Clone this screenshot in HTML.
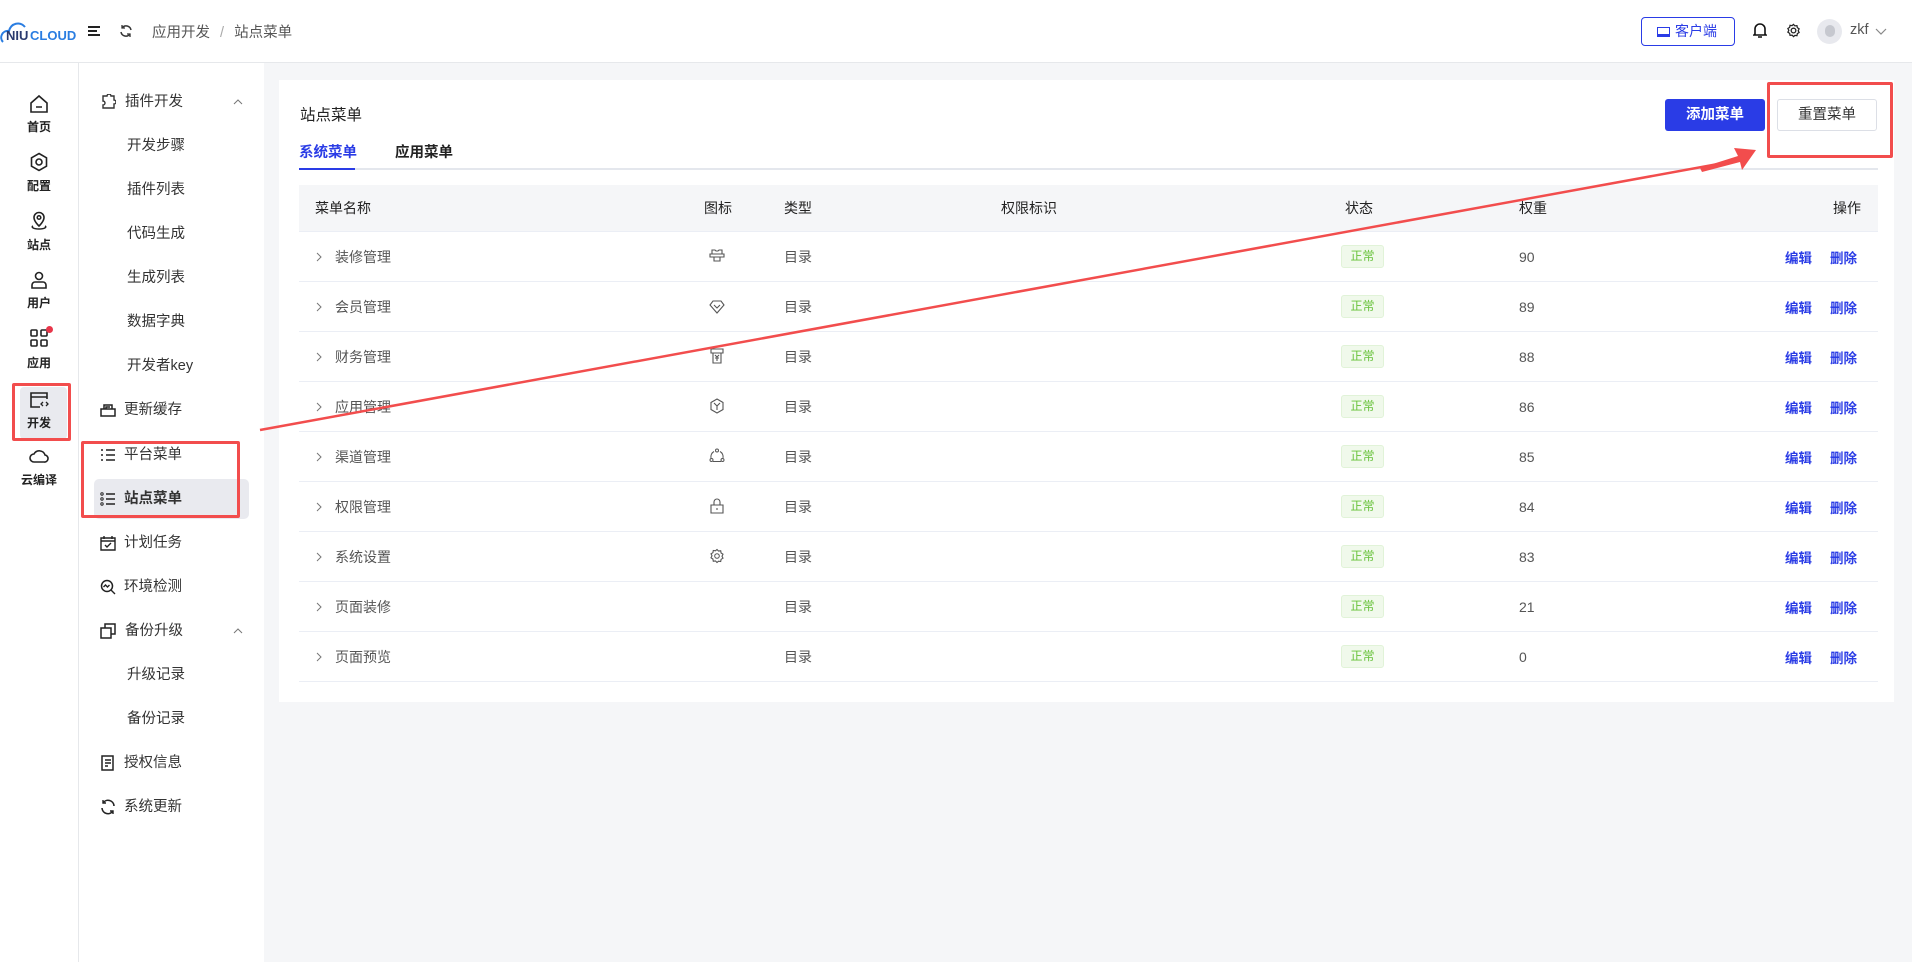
<!DOCTYPE html>
<html><head><meta charset="utf-8">
<style>
*{box-sizing:border-box;margin:0;padding:0}
body{width:1912px;height:962px;overflow:hidden;background:#f5f6f8;font-family:"Liberation Sans","Noto Sans CJK SC",sans-serif;color:#333;position:relative}
.abs{position:absolute}
.header{left:0;top:0;width:1912px;height:63px;background:#fff;border-bottom:1px solid #e6e8eb}
.col1{left:0;top:63px;width:79px;height:899px;background:#fff;border-right:1px solid #e6e8eb}
.col2{left:79px;top:63px;width:185px;height:899px;background:#fff}
.ni{position:absolute;left:0;width:78px;text-align:center;font-size:12px;font-weight:bold;color:#222}
.si{position:absolute;font-size:14.5px;color:#333;white-space:nowrap;line-height:20px}
.card{left:279px;top:80px;width:1615px;height:622px;background:#fff}
.th{position:absolute;top:185px;left:299px;width:1579px;height:47px;background:#f5f6f8;border-bottom:1px solid #ebeef5}
.tr{position:absolute;left:299px;width:1579px;height:50px;border-bottom:1px solid #ebeef5}
.c{position:absolute;font-size:14px;white-space:nowrap;top:50%;transform:translateY(-50%);color:#555}
.th .c{color:#222}
.tag{position:absolute;left:1042px;top:13px;width:43px;height:23px;border:1px solid #e1f3d8;background:#f0f9eb;color:#67c23a;font-size:12px;text-align:center;line-height:21px;border-radius:3px}
.blue{color:#2a3ce6!important;font-weight:bold;font-size:13.5px!important}
.ch{position:absolute;left:17px;top:20px}
.ic{position:absolute;left:410px;top:16px}
svg{display:block}
</style></head><body>
<div class="abs header"></div>
<svg class="abs" style="left:0;top:18px" width="80" height="28" viewBox="0 0 80 28"><path d="M3 24 C-1 20 2 12 9 13 C11 5 20 3 25 9" fill="none" stroke="#2a7de1" stroke-width="2"/><text x="6" y="22" font-family="Liberation Sans" font-weight="bold" font-size="13" fill="#2a3a6e">NIU</text><text x="30" y="22" font-family="Liberation Sans" font-weight="bold" font-size="13" fill="#2a7de1">CLOUD</text></svg>
<svg class="abs" style="left:87px;top:25px" width="14" height="12"><path d="M1 2h12M1 6h9M1 10h12" stroke="#222" stroke-width="2"/></svg>
<svg class="abs" style="left:119px;top:24px" width="14" height="14" viewBox="0 0 14 14"><path d="M12 6A5 5 0 0 0 3 4M2 8a5 5 0 0 0 9 2" fill="none" stroke="#333" stroke-width="1.5"/><path d="M3 1v3h3M11 13v-3H8" fill="none" stroke="#333" stroke-width="1.3"/></svg>
<div class="abs" style="left:152px;top:21px;font-size:14.5px;color:#555">应用开发 <span style="color:#aaa;margin:0 6px">/</span> 站点菜单</div>
<div class="abs" style="left:1641px;top:17px;width:94px;height:29px;border:1px solid #2a3ce6;border-radius:4px;color:#2a3ce6;font-size:14px;line-height:27px;padding-left:15px"><span style="display:inline-block;width:13px;height:10px;border:1.5px solid #2a3ce6;border-bottom-width:3px;vertical-align:-1px;margin-right:5px"></span>客户端</div>
<svg class="abs" style="left:1753px;top:22px" width="14" height="17" viewBox="0 0 14 17"><path d="M2 12V7a5 5 0 0 1 10 0v5l1 1H1z M5 15h4" fill="none" stroke="#111" stroke-width="1.6"/></svg>
<svg class="abs" style="left:1786px;top:23px" width="15" height="15" viewBox="0 0 16 16"><circle cx="8" cy="8" r="2.5" fill="none" stroke="#222" stroke-width="1.4"/><path d="M8 1.5l1.5 1.6 2.2-.3.4 2.2 1.9 1.2-1 2 1 2-1.9 1.1-.4 2.2-2.2-.3L8 14.5l-1.5-1.6-2.2.3-.4-2.2L2 9.8l1-2-1-2 1.9-1.1.4-2.2 2.2.3z" fill="none" stroke="#222" stroke-width="1.3"/></svg>
<div class="abs" style="left:1817px;top:19px;width:25px;height:25px;border-radius:50%;background:#e8e9ee"><div style="margin:6px auto 0;width:10px;height:12px;border-radius:5px;background:#c6c8cf"></div></div>
<div class="abs" style="left:1850px;top:22px;font-size:14.5px;color:#555">zkf</div>
<svg class="abs" style="left:1875px;top:28px" width="12" height="8"><path d="M1 1l5 5 5-5" fill="none" stroke="#888" stroke-width="1.2"/></svg>

<div class="abs col1"></div>
<div class="abs col2"></div>
<svg class="abs" style="left:29px;top:94px" width="20" height="20" viewBox="0 0 20 20"><path d="M2 9L10 2l8 7v9H2z M7 13h6" fill="none" stroke="#222" stroke-width="1.6"/></svg>
<div class="ni" style="top:118px">首页</div>
<svg class="abs" style="left:29px;top:152px" width="20" height="20" viewBox="0 0 20 20"><path d="M10 1.5l7.5 4.3v8.4L10 18.5l-7.5-4.3V5.8z" fill="none" stroke="#222" stroke-width="1.6"/><circle cx="10" cy="10" r="3" fill="none" stroke="#222" stroke-width="1.6"/></svg>
<div class="ni" style="top:177px">配置</div>
<svg class="abs" style="left:29px;top:211px" width="20" height="20" viewBox="0 0 20 20"><path d="M10 15s-5-4.5-5-8.5a5 5 0 0 1 10 0c0 4-5 8.5-5 8.5z M4 15c-2 1 0 3 6 3s8-2 6-3" fill="none" stroke="#222" stroke-width="1.6"/><circle cx="10" cy="6.5" r="1.8" fill="none" stroke="#222" stroke-width="1.5"/></svg>
<div class="ni" style="top:236px">站点</div>
<svg class="abs" style="left:29px;top:270px" width="20" height="20" viewBox="0 0 20 20"><circle cx="10" cy="6" r="3.5" fill="none" stroke="#222" stroke-width="1.6"/><path d="M3 18v-3a3 3 0 0 1 3-3h8a3 3 0 0 1 3 3v3z" fill="none" stroke="#222" stroke-width="1.6"/></svg>
<div class="ni" style="top:294px">用户</div>
<svg class="abs" style="left:29px;top:328px" width="20" height="20" viewBox="0 0 20 20"><rect x="2" y="2" width="6" height="6" rx="1" fill="none" stroke="#222" stroke-width="1.6"/><rect x="12" y="2" width="6" height="6" rx="1" fill="none" stroke="#222" stroke-width="1.6"/><rect x="2" y="12" width="6" height="6" rx="1" fill="none" stroke="#222" stroke-width="1.6"/><rect x="12" y="12" width="6" height="6" rx="1" fill="none" stroke="#222" stroke-width="1.6"/></svg>
<div class="abs" style="left:46px;top:326px;width:7px;height:7px;border-radius:50%;background:#e8364a"></div>
<div class="ni" style="top:354px">应用</div>
<div class="abs" style="left:20px;top:387px;width:47px;height:52px;background:#e9eaef;border-radius:4px"></div>
<svg class="abs" style="left:29px;top:390px" width="20" height="20" viewBox="0 0 20 20"><path d="M18 9V3H2v14h9 M2 7h16" fill="none" stroke="#222" stroke-width="1.6"/><path d="M14 12l-2 2 2 2M17 12l2 2-2 2" fill="none" stroke="#222" stroke-width="1.3"/></svg>
<div class="ni" style="top:414px">开发</div>
<svg class="abs" style="left:28px;top:448px" width="22" height="16" viewBox="0 0 22 16"><path d="M6 14a4 4 0 0 1 0-8 6 6 0 0 1 11 1 3.5 3.5 0 0 1-1 7z" fill="none" stroke="#222" stroke-width="1.6"/></svg>
<div class="ni" style="top:471px">云编译</div>

<svg class="abs" style="left:100px;top:94px" width="16" height="16" viewBox="0 0 16 16"><path d="M3 2h4a2 2 0 0 1 4 0h3v4a2 2 0 0 1 0 4v4H3v-3a2 2 0 0 0 0-4z" fill="none" stroke="#333" stroke-width="1.4"/></svg>
<div class="si" style="left:125px;top:92px">插件开发</div>
<svg class="abs" style="left:233px;top:99px" width="10" height="6"><path d="M1 5l4-4 4 4" fill="none" stroke="#777" stroke-width="1"/></svg>
<div class="si" style="left:127px;top:136px">开发步骤</div>
<div class="si" style="left:127px;top:180px">插件列表</div>
<div class="si" style="left:127px;top:224px">代码生成</div>
<div class="si" style="left:127px;top:268px">生成列表</div>
<div class="si" style="left:127px;top:312px">数据字典</div>
<div class="si" style="left:127px;top:356px">开发者key</div>
<svg class="abs" style="left:100px;top:403px" width="16" height="14" viewBox="0 0 16 14"><path d="M1 6h14v7H1z M4 6V2h8v4 M6 6V4h4" fill="none" stroke="#222" stroke-width="1.5"/></svg>
<div class="si" style="left:124px;top:400px">更新缓存</div>
<svg class="abs" style="left:100px;top:448px" width="16" height="14" viewBox="0 0 16 14"><path d="M6 2h9M6 7h9M6 12h9M1 2h2M1 7h2M1 12h2" stroke="#222" stroke-width="1.4"/></svg>
<div class="si" style="left:124px;top:445px">平台菜单</div>
<div class="abs" style="left:94px;top:479px;width:155px;height:40px;background:#e9eaef;border-radius:5px"></div>
<svg class="abs" style="left:100px;top:492px" width="16" height="14" viewBox="0 0 16 14"><path d="M6 2h9M6 7h9M6 12h9" stroke="#222" stroke-width="1.4"/><circle cx="2" cy="2" r="1.2" fill="none" stroke="#222"/><circle cx="2" cy="7" r="1.2" fill="none" stroke="#222"/><circle cx="2" cy="12" r="1.2" fill="none" stroke="#222"/></svg>
<div class="si" style="left:124px;top:489px;font-weight:bold">站点菜单</div>
<svg class="abs" style="left:100px;top:535px" width="16" height="16" viewBox="0 0 16 16"><path d="M1 3h14v12H1z M1 6h14 M4 1v3M12 1v3 M5 10l2 2 4-4" fill="none" stroke="#222" stroke-width="1.4"/></svg>
<div class="si" style="left:124px;top:533px">计划任务</div>
<svg class="abs" style="left:100px;top:579px" width="16" height="16" viewBox="0 0 16 16"><circle cx="7" cy="7" r="5.5" fill="none" stroke="#222" stroke-width="1.5"/><path d="M11 11l4 4 M3.5 8l2-2 2 2 2-2" fill="none" stroke="#222" stroke-width="1.4"/></svg>
<div class="si" style="left:124px;top:577px">环境检测</div>
<svg class="abs" style="left:100px;top:623px" width="16" height="16" viewBox="0 0 16 16"><path d="M1 5h10v10H1z M5 5V1h10v10h-4" fill="none" stroke="#222" stroke-width="1.5"/></svg>
<div class="si" style="left:125px;top:621px">备份升级</div>
<svg class="abs" style="left:233px;top:628px" width="10" height="6"><path d="M1 5l4-4 4 4" fill="none" stroke="#777" stroke-width="1"/></svg>
<div class="si" style="left:127px;top:665px">升级记录</div>
<div class="si" style="left:127px;top:709px">备份记录</div>
<svg class="abs" style="left:101px;top:755px" width="14" height="17" viewBox="0 0 14 17"><path d="M1 1h11v14H1z M4 5h6M4 8h6M4 11h3" fill="none" stroke="#222" stroke-width="1.5"/></svg>
<div class="si" style="left:124px;top:753px">授权信息</div>
<svg class="abs" style="left:100px;top:799px" width="16" height="16" viewBox="0 0 16 16"><path d="M14 7A6 6 0 0 0 3 4M2 9a6 6 0 0 0 11 3" fill="none" stroke="#222" stroke-width="1.6"/><path d="M3 1v3h3M13 15v-3h-3" fill="none" stroke="#222" stroke-width="1.4"/></svg>
<div class="si" style="left:124px;top:797px">系统更新</div>

<div class="abs card"></div>
<div class="abs" style="left:300px;top:103px;font-size:15.5px;color:#222">站点菜单</div>
<div class="abs" style="left:299px;top:141px;font-size:14.5px;color:#2a3ce6;font-weight:bold">系统菜单</div>
<div class="abs" style="left:395px;top:141px;font-size:14.5px;color:#222;font-weight:bold">应用菜单</div>
<div class="abs" style="left:299px;top:168px;width:1579px;height:2px;background:#e4e7ed"></div>
<div class="abs" style="left:299px;top:168px;width:56px;height:2px;background:#2a3ce6"></div>
<div class="abs" style="left:1665px;top:99px;width:100px;height:32px;background:#2a3ce6;border-radius:3px;color:#fff;font-size:14.5px;font-weight:bold;text-align:center;line-height:32px">添加菜单</div>
<div class="abs" style="left:1777px;top:99px;width:100px;height:32px;border:1px solid #dcdfe6;border-radius:3px;color:#333;font-size:14.5px;text-align:center;line-height:30px">重置菜单</div>

<div class="th">
<div class="c" style="left:16px">菜单名称</div>
<div class="c" style="left:405px">图标</div>
<div class="c" style="left:485px">类型</div>
<div class="c" style="left:702px">权限标识</div>
<div class="c" style="left:1046px">状态</div>
<div class="c" style="left:1220px">权重</div>
<div class="c" style="right:17px">操作</div>
</div>

<div class="tr" style="top:232px"><svg class="ch" width="6" height="10"><path d="M1 1l4 4-4 4" fill="none" stroke="#777"/></svg><div class="c" style="left:36px">装修管理</div><svg class="ic" width="16" height="16" viewBox="0 0 16 16"><path d="M3 2h3l1 1h2l1-1h3v4H3z M1 6h14v3H1z M5 9v4h6V9" fill="none" stroke="#555" stroke-width="1.1"/></svg><div class="c" style="left:485px">目录</div><div class="tag">正常</div><div class="c" style="left:1220px">90</div><div class="c blue" style="left:1486px">编辑</div><div class="c blue" style="left:1531px">删除</div></div>
<div class="tr" style="top:282px"><svg class="ch" width="6" height="10"><path d="M1 1l4 4-4 4" fill="none" stroke="#777"/></svg><div class="c" style="left:36px">会员管理</div><svg class="ic" width="16" height="16" viewBox="0 0 16 16"><path d="M4 3h8l3 4-7 8-7-8z M5 7l3 3 3-3" fill="none" stroke="#555" stroke-width="1.1"/></svg><div class="c" style="left:485px">目录</div><div class="tag">正常</div><div class="c" style="left:1220px">89</div><div class="c blue" style="left:1486px">编辑</div><div class="c blue" style="left:1531px">删除</div></div>
<div class="tr" style="top:332px"><svg class="ch" width="6" height="10"><path d="M1 1l4 4-4 4" fill="none" stroke="#777"/></svg><div class="c" style="left:36px">财务管理</div><svg class="ic" width="16" height="16" viewBox="0 0 16 16"><path d="M2 1h12v4H2z M4 5v10h8V5 M6 7l2 2 2-2M8 9v4M6 10h4" fill="none" stroke="#555" stroke-width="1.1"/></svg><div class="c" style="left:485px">目录</div><div class="tag">正常</div><div class="c" style="left:1220px">88</div><div class="c blue" style="left:1486px">编辑</div><div class="c blue" style="left:1531px">删除</div></div>
<div class="tr" style="top:382px"><svg class="ch" width="6" height="10"><path d="M1 1l4 4-4 4" fill="none" stroke="#777"/></svg><div class="c" style="left:36px">应用管理</div><svg class="ic" width="16" height="16" viewBox="0 0 16 16"><path d="M8 1l6 3.5v7L8 15l-6-3.5v-7z M5 5l3 3 3-3M8 8v4" fill="none" stroke="#555" stroke-width="1.1"/></svg><div class="c" style="left:485px">目录</div><div class="tag">正常</div><div class="c" style="left:1220px">86</div><div class="c blue" style="left:1486px">编辑</div><div class="c blue" style="left:1531px">删除</div></div>
<div class="tr" style="top:432px"><svg class="ch" width="6" height="10"><path d="M1 1l4 4-4 4" fill="none" stroke="#777"/></svg><div class="c" style="left:36px">渠道管理</div><svg class="ic" width="16" height="16" viewBox="0 0 16 16"><circle cx="8" cy="2.5" r="1.5" fill="none" stroke="#555"/><circle cx="2.5" cy="12" r="1.5" fill="none" stroke="#555"/><circle cx="13.5" cy="12" r="1.5" fill="none" stroke="#555"/><path d="M5 3.5a6 6 0 0 0-3 6.5M11 3.5a6 6 0 0 1 3 6.5M4 13.5h8" fill="none" stroke="#555"/></svg><div class="c" style="left:485px">目录</div><div class="tag">正常</div><div class="c" style="left:1220px">85</div><div class="c blue" style="left:1486px">编辑</div><div class="c blue" style="left:1531px">删除</div></div>
<div class="tr" style="top:482px"><svg class="ch" width="6" height="10"><path d="M1 1l4 4-4 4" fill="none" stroke="#777"/></svg><div class="c" style="left:36px">权限管理</div><svg class="ic" width="16" height="16" viewBox="0 0 16 16"><path d="M2 7h12v8H2z M5 7V4a3 3 0 0 1 6 0v3 M8 10v2" fill="none" stroke="#555" stroke-width="1.1"/></svg><div class="c" style="left:485px">目录</div><div class="tag">正常</div><div class="c" style="left:1220px">84</div><div class="c blue" style="left:1486px">编辑</div><div class="c blue" style="left:1531px">删除</div></div>
<div class="tr" style="top:532px"><svg class="ch" width="6" height="10"><path d="M1 1l4 4-4 4" fill="none" stroke="#777"/></svg><div class="c" style="left:36px">系统设置</div><svg class="ic" width="16" height="16" viewBox="0 0 16 16"><circle cx="8" cy="8" r="2.3" fill="none" stroke="#555"/><path d="M8 1.5l1.5 1.6 2.2-.3.4 2.2 1.9 1.2-1 2 1 2-1.9 1.1-.4 2.2-2.2-.3L8 14.5l-1.5-1.6-2.2.3-.4-2.2L2 9.8l1-2-1-2 1.9-1.1.4-2.2 2.2.3z" fill="none" stroke="#555" stroke-width="1.1"/></svg><div class="c" style="left:485px">目录</div><div class="tag">正常</div><div class="c" style="left:1220px">83</div><div class="c blue" style="left:1486px">编辑</div><div class="c blue" style="left:1531px">删除</div></div>
<div class="tr" style="top:582px"><svg class="ch" width="6" height="10"><path d="M1 1l4 4-4 4" fill="none" stroke="#777"/></svg><div class="c" style="left:36px">页面装修</div><div class="c" style="left:485px">目录</div><div class="tag">正常</div><div class="c" style="left:1220px">21</div><div class="c blue" style="left:1486px">编辑</div><div class="c blue" style="left:1531px">删除</div></div>
<div class="tr" style="top:632px"><svg class="ch" width="6" height="10"><path d="M1 1l4 4-4 4" fill="none" stroke="#777"/></svg><div class="c" style="left:36px">页面预览</div><div class="c" style="left:485px">目录</div><div class="tag">正常</div><div class="c" style="left:1220px">0</div><div class="c blue" style="left:1486px">编辑</div><div class="c blue" style="left:1531px">删除</div></div>

<div class="abs" style="left:12px;top:383px;width:59px;height:58px;border:3px solid #f24d4d;border-radius:2px"></div>
<div class="abs" style="left:81px;top:441px;width:159px;height:77px;border:3px solid #f24d4d;border-radius:2px"></div>
<div class="abs" style="left:1767px;top:82px;width:126px;height:76px;border:3px solid #f24d4d;border-radius:2px"></div>
<svg class="abs" style="left:0;top:0" width="1912" height="962"><path d="M260 430 L1740 160" stroke="#f24d4d" stroke-width="2.5" fill="none"/><path d="M1756 150 L1734 148 L1738 156 L1700 168 L1702 172 L1740 162 L1742 170z" fill="#f24d4d"/></svg>
</body></html>
